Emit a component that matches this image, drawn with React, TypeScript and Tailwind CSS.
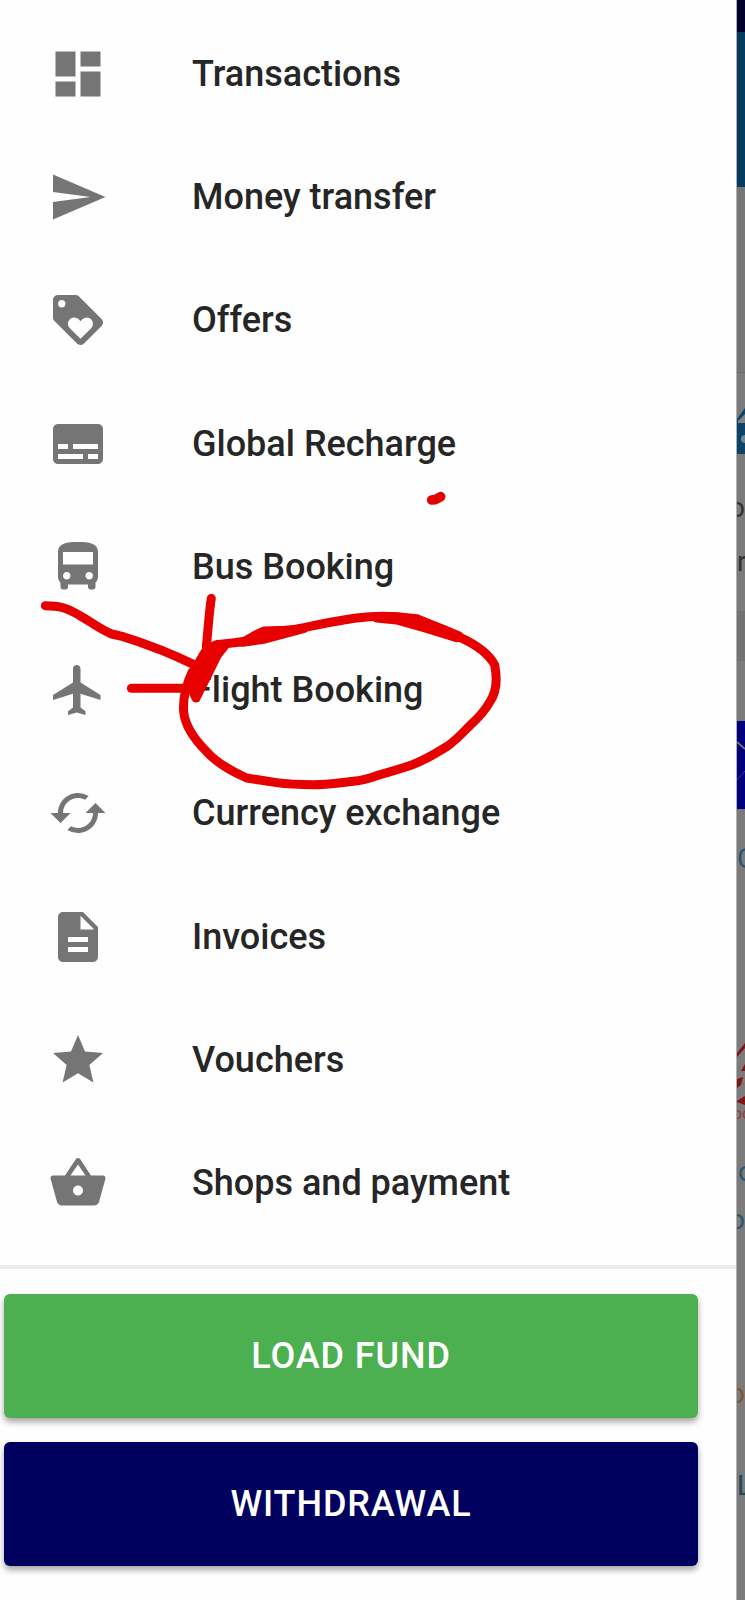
import type { ComponentType } from "react";
import {
  MdCached,
  MdDashboard,
  MdDescription,
  MdDirectionsBus,
  MdGrade,
  MdLoyalty,
  MdSend,
  MdSubtitles,
} from "react-icons/md";

type MenuItem = {
  label: string;
  icon: ComponentType<{ className?: string }>;
};

const menuItems: MenuItem[] = [
  { label: "Transactions", icon: MdDashboard },
  { label: "Money transfer", icon: MdSend },
  { label: "Offers", icon: MdLoyalty },
  { label: "Global Recharge", icon: MdSubtitles },
  { label: "Bus Booking", icon: MdDirectionsBus },
  { label: "Flight Booking", icon: PlaneIcon },
  { label: "Currency exchange", icon: MdCached },
  { label: "Invoices", icon: MdDescription },
  { label: "Vouchers", icon: MdGrade },
  { label: "Shops and payment", icon: BasketIcon },
];

function PlaneIcon({ className }: { className?: string }) {
  return (
    <svg viewBox="0 0 24 24" fill="currentColor" className={className}>
      <path d="M21 16v-2l-8-5V3.5c0-.83-.67-1.5-1.5-1.5S10 2.67 10 3.5V9l-8 5v2l8-2.5V19l-2 1.5V22l3.5-1 3.5 1v-1.5L13 19v-5.5l8 2.5z" />
    </svg>
  );
}

function BasketIcon({ className }: { className?: string }) {
  return (
    <svg viewBox="0 0 24 24" fill="currentColor" className={className}>
      <path d="M17.21 9l-4.38-6.56a.99.99 0 0 0-1.66 0L6.79 9H2c-.55 0-1 .45-1 1 0 .09.01.18.04.27l2.54 9.27c.23.84 1 1.46 1.92 1.46h13c.92 0 1.69-.62 1.93-1.46l2.54-9.27L23 10c0-.55-.45-1-1-1h-4.79zM9 9l3-4.4L15 9H9zm3 8c-1.1 0-2-.9-2-2s.9-2 2-2 2 .9 2 2-.9 2-2 2z" />
    </svg>
  );
}

// Red pen marks around "Flight Booking"
function PenMarks() {
  return (
    <svg
      viewBox="0 -300 1470 960"
      className="absolute left-[30px] top-[480px] w-[490px] h-[320px] pointer-events-none"
      fill="none"
      stroke="#e60000"
      strokeWidth="27"
      strokeLinecap="round"
      strokeLinejoin="round"
      aria-hidden="true"
    >
      <path d="M1205 -240L1215 -241L1232 -250" strokeWidth="29" />
      <path d="M46 77C90 77 110 84 150 107C180 123 205 145 245 162L280 170L330 187L390 209L440 230L490 253" />
      <path d="M304 325H465" />
      <path d="M544 55C538 90 535 140 529 200" />
      <path
        d="M562 193L532 205L510 242L488 280L484 325L498 354L525 300L552 245L562 225L582 200Z"
        fill="#e60000"
      />
      <path d="M570 193C600 190 650 186 700 172C740 162 775 153 810 145C870 133 930 120 980 114C1020 109 1075 108 1110 112C1170 120 1240 147 1290 172C1330 190 1375 218 1394 255C1402 295 1400 335 1380 365C1366 390 1350 410 1320 436C1297 460 1277 482 1250 500C1215 522 1180 542 1145 555C1110 567 1075 577 1040 587C1010 598 990 602 970 604C930 608 890 614 850 614C810 614 775 613 740 608L650 594C600 572 560 548 530 515C495 480 465 440 461 395C458 355 468 315 487 275" />
      <path
        d="M638 187L680 163L703 153L765 151L820 146L700 178Z M1040 114L1100 110L1160 116L1287 168L1280 173L1190 145L1100 120Z"
        fill="#e60000"
      />
    </svg>
  );
}

// The sliver of the home page that stays visible behind the drawer
function DimmedPage() {
  return (
    <div
      className="flex-1 min-w-0 overflow-hidden bg-[#7b7b7b] border-l border-[#b0b0b0] text-[28px] leading-none"
      aria-hidden="true"
    >
      <div className="h-8 bg-[#00002c]" />
      <div className="h-[155px] bg-[#063b60]" />
      <div className="h-[186px] border-b border-[#696969] bg-[#777777]" />
      <svg viewBox="0 0 8 46" className="mt-[35px] w-2 h-[46px]">
        <path d="M0 11L8 0V19H0z" fill="#0b4468" />
        <path d="M1 13L8 6V15H1z" fill="#7b8587" />
        <path d="M0 19H8V46H0z" fill="#0b4468" />
        <circle cx="8" cy="31" r="4" fill="#7b8587" />
      </svg>
      <p className="mt-10 -ml-2 text-[#333333]">o</p>
      <p className="mt-[26px] text-[#333333]">r</p>
      <div className="mt-[35px] h-[50px] bg-[#737373]" />
      <svg viewBox="0 0 8 88" className="mt-[60px] w-2 h-[88px]" fill="none">
        <path d="M0 0H8V88H0z" fill="#00007c" />
        <path d="M0 21L8 28" stroke="#77706f" strokeWidth="2" />
        <path d="M0 59L8 50" stroke="#3c3c9c" strokeWidth="1" />
      </svg>
      <p className="mt-9 text-[#2d566e]">C</p>
      <svg viewBox="0 0 8 65" className="mt-[168px] w-2 h-[65px]">
        <path d="M0 12L8 2V7L0 16z" fill="#801515" />
        <path d="M4 30L8 23V30z M0 38L6 36L4 44L0 47z" fill="#801515" />
        <path d="M0 60L8 55V64L0 61z" fill="#801515" />
      </svg>
      <p className="-ml-1 text-base leading-none text-[#8f3c3c]">oc</p>
      <p className="mt-9 ml-px text-[#2d566e]">o</p>
      <p className="mt-5 -ml-2 text-[#2d566e]">o</p>
      <p className="mt-[146px] -ml-2 text-[#7c5537]">oc</p>
      <p className="mt-[64px] text-[#24465c]">L</p>
    </div>
  );
}

export default function App() {
  return (
    <div className="flex min-h-screen bg-[#fefefe] font-['Roboto',sans-serif]">
      <aside className="relative w-full shrink basis-[736px] max-w-[736px]">
        <nav className="pt-3 pb-5">
          <ul className="grid auto-rows-fr min-h-[1233px]">
            {menuItems.map(({ label, icon: Icon }) => (
              <li key={label} className="flex">
                <a
                  href="#"
                  className="flex flex-1 items-center gap-[84px] pl-12 text-4xl font-medium text-[#262626]"
                >
                  <Icon className="w-[60px] h-[60px] shrink-0 text-[#757575]" />
                  {label}
                </a>
              </li>
            ))}
          </ul>
        </nav>

        <div className="flex flex-col gap-6 border-t-4 border-[#ebebeb] pt-[25px] pb-8 pl-1 pr-[38px]">
          <button
            type="button"
            className="h-[124px] rounded-md bg-[#4caf50] text-4xl font-medium tracking-wide text-white shadow-[0_4px_6px_rgba(0,0,0,0.35)]"
          >
            LOAD FUND
          </button>
          <button
            type="button"
            className="h-[124px] rounded-md bg-[#00005f] text-4xl font-medium tracking-wide text-white shadow-[0_4px_6px_rgba(0,0,0,0.35)]"
          >
            WITHDRAWAL
          </button>
        </div>

        <PenMarks />
      </aside>

      <DimmedPage />
    </div>
  );
}
